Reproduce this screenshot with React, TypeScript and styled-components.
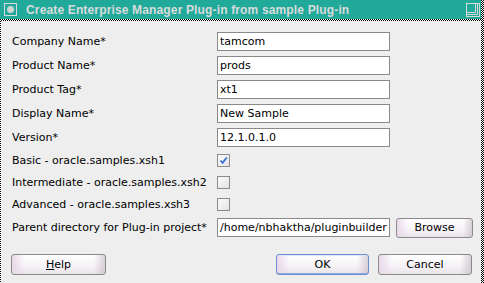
import React from "react";
import styled, { createGlobalStyle } from "styled-components";

const Global = createGlobalStyle`
  html, body { margin: 0; padding: 0; overflow: hidden; background: #eeeeee; }
  * { box-sizing: border-box; }
`;

const checker = `repeating-conic-gradient(#000 0 25%, #fff 0 50%) 0 0 / 2px 2px`;

const Window = styled.div`
  width: 484px;
  height: 283px;
  display: flex;
  flex-direction: column;
  background: ${checker};
  padding-right: 3px;
  font-family: "DejaVu Sans", sans-serif;
  font-size: 11px;
  color: #000;
`;

const TitleBar = styled.div`
  height: 19px;
  flex: none;
  background: #21a99a;
  display: flex;
  align-items: center;
  padding: 0 0 0 4px;
  margin-bottom: 2px;
`;

const TitleIcon = styled.div`
  width: 13px;
  height: 13px;
  border: 1px solid #d6dada;
  display: flex;
  align-items: center;
  justify-content: center;
  flex: none;
  &::after {
    content: "";
    width: 7px;
    height: 7px;
    border-radius: 50%;
    background: #d0d4d4;
  }
`;

const TitleText = styled.div`
  margin-left: 9px;
  font-family: "Liberation Sans", Arial, sans-serif;
  font-weight: bold;
  font-size: 12px;
  letter-spacing: 0.15px;
  color: #d8dcdc;
  flex: 1;
  white-space: nowrap;
`;

const MaxButton = styled.svg`
  width: 14px;
  height: 14px;
  margin-right: 1px;
  flex: none;
`;

const Body = styled.div`
  flex: 1;
  margin-left: 1px;
  background: #eeeeee;
  padding: 11px 9px 0 11px;
  display: flex;
  flex-direction: column;
`;

const Form = styled.div`
  display: grid;
  grid-template-columns: 199px 173px 77px;
  grid-template-rows: 19px 19px 19px 19px 19px 17px 17px 17px 19px;
  column-gap: 6px;
  row-gap: 5px;
  align-items: center;
`;

const Label = styled.div`
  grid-column: 1;
  white-space: nowrap;
  line-height: 13px;
`;

const Input = styled.div`
  grid-column: 2;
  height: 19px;
  border: 1px solid #8a8a8a;
  background: #fff;
  padding: 0 2px;
  line-height: 17px;
  white-space: nowrap;
  overflow: hidden;
`;

const CheckBox = styled.div<{ $checked?: boolean }>`
  grid-column: 2;
  width: 13px;
  height: 13px;
  border: 1px solid #8c8c8c;
  background: linear-gradient(135deg, #fbfafb 0%, #efecef 60%, #e4e0e4 100%);
  display: flex;
  align-items: center;
  justify-content: center;
`;

const Button = styled.div<{ $default?: boolean; $w: number; $h: number }>`
  width: ${(p) => p.$w}px;
  height: ${(p) => p.$h}px;
  border: 1px solid ${(p) => (p.$default ? "#6b8fd0" : "#8a8a8a")};
  border-radius: 3px;
  background:
    linear-gradient(to right, rgba(232, 214, 232, 0.9) 0, rgba(250, 246, 250, 0) 14%, rgba(250, 246, 250, 0) 88%, rgba(200, 192, 200, 0.7) 100%),
    linear-gradient(to bottom, #ffffff 0%, #f7f3f7 55%, #e9e4e9 100%);
  box-shadow: ${(p) => (p.$default ? "inset 0 -1px 0 #8eaae2, inset 0 1px 0 #dfe8fa" : "none")};
  display: flex;
  align-items: center;
  justify-content: center;
  flex: none;
  line-height: 13px;
`;

const Footer = styled.div`
  display: flex;
  align-items: center;
  margin-top: 17px;
  margin-left: -1px;
`;

const Spacer = styled.div`
  flex: 1;
`;

const FooterGap = styled.div`
  width: 9px;
`;

const fields: [string, string][] = [
  ["Company Name*", "tamcom"],
  ["Product Name*", "prods"],
  ["Product Tag*", "xt1"],
  ["Display Name*", "New Sample"],
  ["Version*", "12.1.0.1.0"],
];

const checks: [string, boolean][] = [
  ["Basic - oracle.samples.xsh1", true],
  ["Intermediate - oracle.samples.xsh2", false],
  ["Advanced - oracle.samples.xsh3", false],
];

export default function App() {
  return (
    <>
      <Global />
      <Window>
        <TitleBar>
          <TitleIcon />
          <TitleText>Create Enterprise Manager Plug-in from sample Plug-in</TitleText>
          <MaxButton viewBox="0 0 14 14">
            <rect x="0.5" y="0.5" width="13" height="13" fill="none" stroke="#d6dada" />
            <path d="M9.5 1 V9.5 H1" fill="none" stroke="#d6dada" />
            <path d="M11.5 1 V11.5 H1" fill="none" stroke="#d6dada" />
          </MaxButton>
        </TitleBar>
        <Body>
          <Form>
            {fields.map(([l, v]) => (
              <React.Fragment key={l}>
                <Label>{l}</Label>
                <Input>{v}</Input>
                <div />
              </React.Fragment>
            ))}
            {checks.map(([l, c]) => (
              <React.Fragment key={l}>
                <Label>{l}</Label>
                <CheckBox $checked={c}>
                  {c && (
                    <svg width="9" height="9" viewBox="0 0 9 9">
                      <path d="M1.5 4.5 L3.6 6.8 L7.8 1.5" fill="none" stroke="#3a6fd2" strokeWidth="1.8" />
                    </svg>
                  )}
                </CheckBox>
                <div />
              </React.Fragment>
            ))}
            <Label>Parent directory for Plug-in project*</Label>
            <Input>/home/nbhaktha/pluginbuilder</Input>
            <Button $w={77} $h={20}>Browse</Button>
          </Form>
          <Footer>
            <Button $w={95} $h={21}>
              <span><u>H</u>elp</span>
            </Button>
            <Spacer />
            <Button $default $w={93} $h={21}>OK</Button>
            <FooterGap />
            <Button $w={94} $h={21}>Cancel</Button>
          </Footer>
        </Body>
      </Window>
    </>
  );
}
